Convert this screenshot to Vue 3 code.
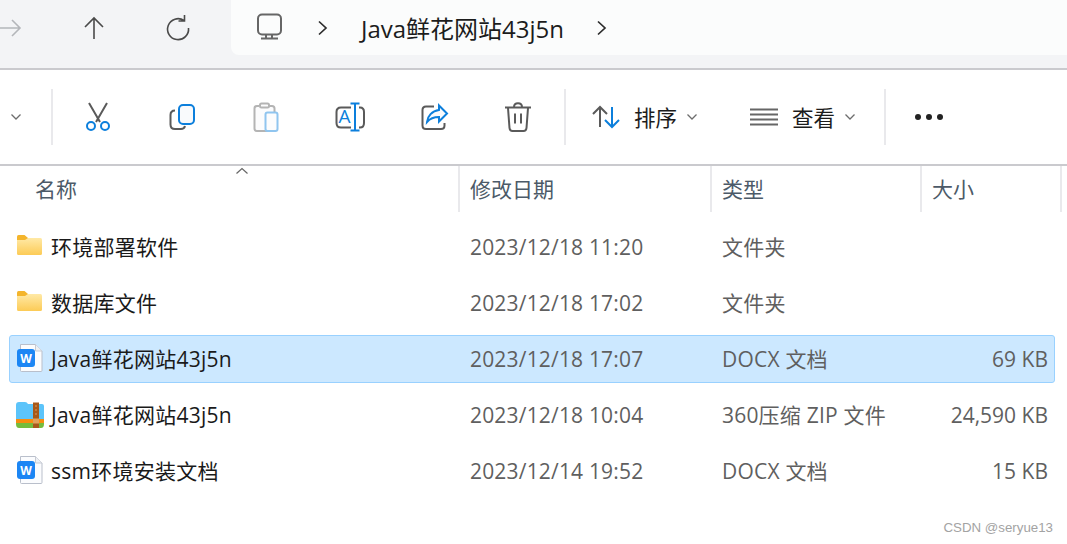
<template>
  <div class="window">
    <div class="navbar">
      <div class="nav-btns">
        <svg class="nav-forward" width="22" height="32" viewBox="0 0 22 32"><path d="M-4 16H20M12 8l8 8-8 8" /></svg>
        <svg class="nav-up" width="32" height="32" viewBox="0 0 32 32"><path d="M16 27V6M7 15l9-9 9 9" /></svg>
        <svg class="nav-refresh" width="32" height="32" viewBox="0 0 32 32"><path d="M22 8.500A10.500 10.500 0 1 0 26.500 16M22.500 3v6h-6" /></svg>
      </div>
      <div class="address">
        <svg class="pc-icon" width="32" height="32" viewBox="0 0 32 32"><rect x="6" y="2.500" width="23" height="20" rx="4" /><path d="M14 23v3M20 23v3M9 26.500h17" /></svg>
        <svg class="crumb" width="12" height="16" viewBox="0 0 12 16"><path d="M2 1.500l7 6.500-7 6.500" /></svg>
        <span class="crumb-text">Java鲜花网站43j5n</span>
        <svg class="crumb" width="12" height="16" viewBox="0 0 12 16"><path d="M2 1.500l7 6.500-7 6.500" /></svg>
      </div>
    </div>

    <div class="toolbar">
      <div class="tb-start">
        <svg width="12" height="8" viewBox="0 0 12 8"><path class="chev" d="M1.500 1.500L6 6l4.500-4.500" /></svg>
      </div>
      <div class="tb-sep"></div>
      <div class="tb-icons">
        <div class="tb-icon">
          <svg width="32" height="32" viewBox="0 0 32 32"><path class="g" d="M8 2l11 19M26 2L15 21" /><circle class="b" cx="10" cy="25" r="4" /><circle class="b" cx="24" cy="25" r="4" /></svg>
        </div>
        <div class="tb-icon">
          <svg width="32" height="32" viewBox="0 0 32 32"><path class="g" d="M10 9.500C7 9.500 5.500 11 5.500 14v9.500c0 3 1.500 4.500 4.500 4.500h6c2 0 3.500-1 4-3" /><rect class="b f" x="14" y="4" width="15" height="19" rx="4" /></svg>
        </div>
        <div class="tb-icon faded">
          <svg width="32" height="32" viewBox="0 0 32 32"><path class="g f" d="M10 5H8Q5.500 5 5.500 7.500v20Q5.500 30 8 30h15q2.500 0 2.500-2.500v-20Q25.500 5 23 5h-3" /><rect class="g f" x="11" y="2.500" width="9" height="4" rx="1.500" /><rect class="b f" x="16.500" y="11.500" width="12" height="18.500" rx="2" /></svg>
        </div>
        <div class="tb-icon">
          <svg width="32" height="32" viewBox="0 0 32 32"><path class="g" d="M18 6.500H8Q3.500 6.500 3.500 11v11Q3.500 26.500 8 26.500h10M26 6.500h1Q31 6.500 31 11v11q0 4.500-4 4.500h-1" /><text class="rename-a" x="11.500" y="22">A</text><path class="b" d="M22 2.500v27M17.500 2.500h9M17.500 29.500h9" /></svg>
        </div>
        <div class="tb-icon">
          <svg width="32" height="32" viewBox="0 0 32 32"><path class="g" d="M17 5.500H9Q5.500 5.500 5.500 9v15.500Q5.500 28 9 28h15q3.500 0 3.500-3.500V22" /><path class="b f" d="M22 4.500l8 8-8 8V16c-5 0-9 1.500-12 5 .5-6 5-11 12-12z" /></svg>
        </div>
        <div class="tb-icon">
          <svg width="32" height="32" viewBox="0 0 32 32"><path class="g" d="M4 6.500h26M13 6c0-5 8-5 8 0M7 7l1.500 20q.3 3 3 3h11q2.700 0 3-3L27 7M14 12.500v10M20 12.500v10" /></svg>
        </div>
      </div>
      <div class="tb-sep"></div>
      <div class="tb-menu sort">
        <svg width="32" height="24" viewBox="0 0 32 24"><path class="g" d="M8 22V2M1 9l7-7 7 7" /><path class="b" d="M20 2v20M13 15l7 7 7-7" /></svg>
        <span>排序</span>
        <svg width="12" height="8" viewBox="0 0 12 8"><path class="chev" d="M1.500 1.500L6 6l4.500-4.500" /></svg>
      </div>
      <div class="tb-menu view">
        <svg width="28" height="20" viewBox="0 0 28 20"><path class="lines" d="M0 2.500h28M0 7.500h28M0 12.500h28M0 17.500h28" /></svg>
        <span>查看</span>
        <svg width="12" height="8" viewBox="0 0 12 8"><path class="chev" d="M1.500 1.500L6 6l4.500-4.500" /></svg>
      </div>
      <div class="tb-sep"></div>
      <div class="tb-more"><i></i><i></i><i></i></div>
    </div>

    <div class="head">
      <div class="col name-col">
        <span>名称</span>
        <svg class="sort-mark" width="14" height="8" viewBox="0 0 14 8"><path d="M1.500 6.500L7 1.500l5.500 5" /></svg>
      </div>
      <div class="col">修改日期</div>
      <div class="col">类型</div>
      <div class="col">大小</div>
    </div>

    <div class="rows">
      <div v-for="f in files" :key="f.name + f.type" class="row" :class="{ selected: f.selected }">
        <div class="cell-name">
          <svg v-if="f.icon === 'folder'" class="file-icon" width="28" height="28" viewBox="0 0 28 28">
            <path d="M1 3.500Q1 2 2.500 2h6L12 5v3H1z" fill="#f4b52c" />
            <path d="M1 7h8l3-2h12.500Q26 5 26 7v13.500q0 1.500-1.500 1.500h-22Q1 22 1 20.500z" fill="url(#fold)" />
            <defs><linearGradient id="fold" x1="0" y1="0" x2="0" y2="1"><stop offset="0" stop-color="#ffe9a6" /><stop offset="1" stop-color="#fccb56" /></linearGradient></defs>
          </svg>
          <svg v-else-if="f.icon === 'word'" class="file-icon" width="28" height="30" viewBox="0 0 28 30">
            <path d="M4.500.5h15L26 7v19.500q0 1-1 1H5.500q-1 0-1-1z" fill="#fbfcfe" stroke="#b9bfcb" stroke-width="1" />
            <path d="M19.500.5V7H26" fill="#eef0f4" stroke="#c6cad3" stroke-width="1" />
            <rect x="1" y="5" width="18" height="18" rx="3" fill="#1c86f4" />
            <text class="word-w" x="10" y="18.500">W</text>
          </svg>
          <svg v-else class="file-icon zip" width="30" height="28" viewBox="0 0 30 28">
            <path d="M1 4Q1 1 4 1h6q2 0 3 2h14q2 0 2 2v15H1z" fill="#5cc4fa" />
            <path d="M1 18h28v4H1z" fill="#f78d0f" />
            <path d="M1 22h28v1q0 4-3 4H4q-3 0-3-4z" fill="#76bc3c" />
            <rect x="18" y="1.500" width="6" height="25.500" fill="#a8591a" />
            <path d="M21 4v12" stroke="#d89a5c" stroke-width="1" stroke-dasharray="2 2" />
            <rect x="18" y="17.500" width="6" height="5" fill="#e0a15c" />
          </svg>
          <span class="file-name">{{ f.name }}</span>
        </div>
        <div class="cell date">{{ f.date }}</div>
        <div class="cell type">{{ f.type }}</div>
        <div class="cell size">{{ f.size }}</div>
      </div>
    </div>

    <div class="watermark">CSDN @seryue13</div>
  </div>
</template>

<script setup>
const files = [
  { name: '环境部署软件', date: '2023/12/18 11:20', type: '文件夹', size: '', icon: 'folder' },
  { name: '数据库文件', date: '2023/12/18 17:02', type: '文件夹', size: '', icon: 'folder' },
  { name: 'Java鲜花网站43j5n', date: '2023/12/18 17:07', type: 'DOCX 文档', size: '69 KB', icon: 'word', selected: true },
  { name: 'Java鲜花网站43j5n', date: '2023/12/18 10:04', type: '360压缩 ZIP 文件', size: '24,590 KB', icon: 'zip' },
  { name: 'ssm环境安装文档', date: '2023/12/14 19:52', type: 'DOCX 文档', size: '15 KB', icon: 'word' }
]
</script>

<style>
html, body {
  margin: 0;
  background: #fff;
  overflow: hidden;
}
</style>

<style scoped>
.window {
  position: relative;
  width: 1067px;
  height: 544px;
  overflow: hidden;
  background: #fff;
  font-family: "Open Sans", "Noto Sans CJK SC", sans-serif;
  font-size: 21px;
  color: #1c1c1c;
}

svg {
  display: block;
  flex: none;
  fill: none;
  stroke-width: 2;
}

/* 顶部地址栏 */
.navbar {
  display: flex;
  height: 68px;
  background: #f3f4f6;
  border-bottom: 2px solid #cacace;
}
.nav-btns {
  display: flex;
  align-items: center;
  width: 231px;
  height: 55px;
  flex: none;
}
.nav-btns path {
  stroke-width: 1.6;
}
.nav-forward {
  stroke: #b4b6ba;
}
.nav-up {
  margin-left: 56px;
  stroke: #4a4a4a;
}
.nav-refresh {
  margin-left: 52px;
  stroke: #4a4a4a;
}
.address {
  display: flex;
  align-items: center;
  flex: 1;
  height: 55px;
  background: #fbfcfc;
  border-bottom-left-radius: 8px;
  padding-left: 21px;
}
.pc-icon {
  stroke: #666;
}
.crumb {
  stroke: #2c2c2c;
  margin-left: 33px;
}
.crumb path {
  stroke-width: 1.7;
}
.crumb-text {
  margin-left: 32px;
  font-size: 24px;
  white-space: nowrap;
}
.crumb-text + .crumb {
  margin-left: 32px;
}

/* 工具栏 */
.toolbar {
  display: flex;
  align-items: center;
  height: 94px;
  border-bottom: 2px solid #cacace;
}
.tb-start {
  width: 51px;
  flex: none;
  padding-left: 10px;
  box-sizing: border-box;
}
.tb-sep {
  width: 2px;
  height: 56px;
  flex: none;
  background: #e9e9ec;
}
.tb-icons {
  display: flex;
  flex: none;
  margin-left: 2px;
  margin-right: 5px;
}
.tb-icon {
  display: flex;
  justify-content: center;
  width: 84px;
}
.tb-icon.faded {
  opacity: 0.45;
}
.g {
  stroke: #5a5a5a;
}
.g.f, .b.f {
  fill: #f9fafc;
}
.b {
  stroke: #0c7fdc;
}
.chev {
  stroke: #6d6d6d;
  stroke-width: 1.3;
}
.lines {
  stroke: #666;
  stroke-width: 1.9;
}
.rename-a {
  font-family: "Open Sans", sans-serif;
  font-size: 19px;
  fill: #0c7fdc;
  text-anchor: middle;
}
.tb-menu {
  display: flex;
  align-items: center;
  flex: none;
}
.tb-menu span {
  font-size: 21.500px;
  margin-bottom: 1px;
}
.sort {
  margin-left: 26px;
  gap: 10px;
}
.sort svg:last-child {
  margin-left: -1px;
}
.view {
  margin-left: 52px;
  gap: 14px;
}
.view svg:last-child {
  margin-left: -5px;
}
.tb-more {
  display: flex;
  gap: 5px;
  margin-left: 29px;
}
.tb-more i {
  width: 6px;
  height: 6px;
  border-radius: 50%;
  background: #222;
}
.view + .tb-sep {
  margin-left: 28px;
}

/* 表头 */
.head {
  display: grid;
  grid-template-columns: 460px 252px 210px 140px;
  height: 46px;
  color: #4c5a68;
  font-size: 21px;
}
.col {
  display: flex;
  align-items: center;
  height: 46px;
  padding-left: 10px;
  padding-bottom: 3px;
  border-right: 2px solid #e9e9ec;
  box-sizing: border-box;
}
.name-col {
  position: relative;
  padding-left: 35px;
}
.sort-mark {
  position: absolute;
  left: 235px;
  top: 1px;
  stroke: #666;
}
.sort-mark path {
  stroke-width: 1.2;
}

/* 文件列表 */
.rows {
  display: flex;
  flex-direction: column;
  gap: 8px;
  margin: 11px 12px 0 9px;
}
.row {
  display: grid;
  grid-template-columns: 451px 252px 210px 133px;
  align-items: center;
  height: 48px;
  box-sizing: border-box;
  border: 1px solid transparent;
  border-radius: 3px;
  color: #5f5f5f;
}
.row.selected {
  background: #cce8ff;
  border-color: #99d1ff;
}
.cell-name {
  display: flex;
  align-items: center;
  color: #1a1a1a;
}
.file-icon {
  margin-left: 6px;
}
.file-icon.zip {
  margin-left: 5px;
}
.file-name {
  margin-left: 7px;
  margin-bottom: 2px;
  letter-spacing: 0.25px;
  white-space: nowrap;
}
.file-icon.zip + .file-name {
  margin-left: 6px;
}
.word-w {
  font-family: "Open Sans", sans-serif;
  font-size: 12px;
  font-weight: 700;
  fill: #fff;
  text-anchor: middle;
}
.cell {
  padding-left: 9px;
  white-space: nowrap;
}
.cell.date {
  letter-spacing: 0.18px;
}
.cell.type {
  letter-spacing: 0.2px;
  margin-bottom: 2px;
}
.cell.size {
  padding: 0 8px 0 0;
  text-align: right;
}

.watermark {
  position: absolute;
  right: 14px;
  bottom: 9px;
  font-family: "Liberation Sans", sans-serif;
  font-size: 13.300px;
  color: #a3a3a3;
}
</style>
